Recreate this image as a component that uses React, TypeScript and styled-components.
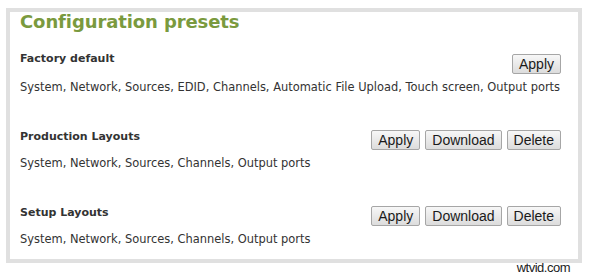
import styled, { createGlobalStyle } from 'styled-components';

const GlobalStyle = createGlobalStyle`
  body {
    margin: 0;
    background: #ffffff;
    font-family: "DejaVu Sans", Verdana, sans-serif;
  }
`;

const presets = [
  {
    name: 'Factory default',
    items: 'System, Network, Sources, EDID, Channels, Automatic File Upload, Touch screen, Output ports',
    actions: ['Apply'],
  },
  {
    name: 'Production Layouts',
    items: 'System, Network, Sources, Channels, Output ports',
    actions: ['Apply', 'Download', 'Delete'],
  },
  {
    name: 'Setup Layouts',
    items: 'System, Network, Sources, Channels, Output ports',
    actions: ['Apply', 'Download', 'Delete'],
  },
];

const App = () => (
  <Page>
    <GlobalStyle />
    <Panel>
      <Heading>Configuration presets</Heading>
      <List>
        {presets.map((preset, idx) => (
          <Preset key={preset.name}>
            <Header>
              <Name>{preset.name}</Name>
              <Actions offset={idx === 0 ? 2 : 0}>
                {preset.actions.map((label) => (
                  <Button key={label} type="button">{label}</Button>
                ))}
              </Actions>
            </Header>
            <Items>{preset.items}</Items>
          </Preset>
        ))}
      </List>
    </Panel>
    <Watermark>wtvid.com</Watermark>
  </Page>
);

const Page = styled.div`
  position: relative;
  width: 590px;
  height: 275px;
  padding: 8px 0 0 6px;
  box-sizing: border-box;
`;

const Panel = styled.div`
  width: 576px;
  height: 255px;
  box-sizing: border-box;
  border: 4px solid #e0e0e0;
  padding: 0 16px 0 10px;
`;

const Heading = styled.h2`
  margin: 0;
  font-size: 18px;
  line-height: 20px;
  font-weight: bold;
  letter-spacing: -0.1px;
  color: #7a9a3e;
`;

const List = styled.div`
  display: flex;
  flex-direction: column;
  gap: 36px;
  margin-top: 20px;
`;

const Preset = styled.div`
  display: flex;
  flex-direction: column;
  gap: 6px;
`;

const Header = styled.div`
  display: flex;
  justify-content: space-between;
  align-items: flex-start;
`;

const Name = styled.div`
  font-size: 11px;
  line-height: 14px;
  font-weight: bold;
  color: #333333;
`;

const Actions = styled.div<{ offset: number }>`
  display: flex;
  gap: 5px;
  margin-top: ${({ offset }) => offset}px;
  margin-right: 1px;
`;

const Button = styled.button`
  height: 20px;
  padding: 0 6px;
  font-family: "Liberation Sans", Arial, sans-serif;
  font-size: 14px;
  line-height: 18px;
  color: #1a1a1a;
  background: linear-gradient(#f7f7f7, #dcdcdc);
  border: 1px solid #a6a6a6;
  border-radius: 2px;
`;

const Items = styled.div`
  font-size: 11.45px;
  line-height: 14px;
  color: #333333;
`;

const Watermark = styled.div`
  position: absolute;
  right: 20px;
  bottom: 0;
  font-family: "Liberation Sans", Arial, sans-serif;
  font-size: 13px;
  line-height: 14px;
  color: #222222;
  letter-spacing: -0.5px;
`;

export default App;
